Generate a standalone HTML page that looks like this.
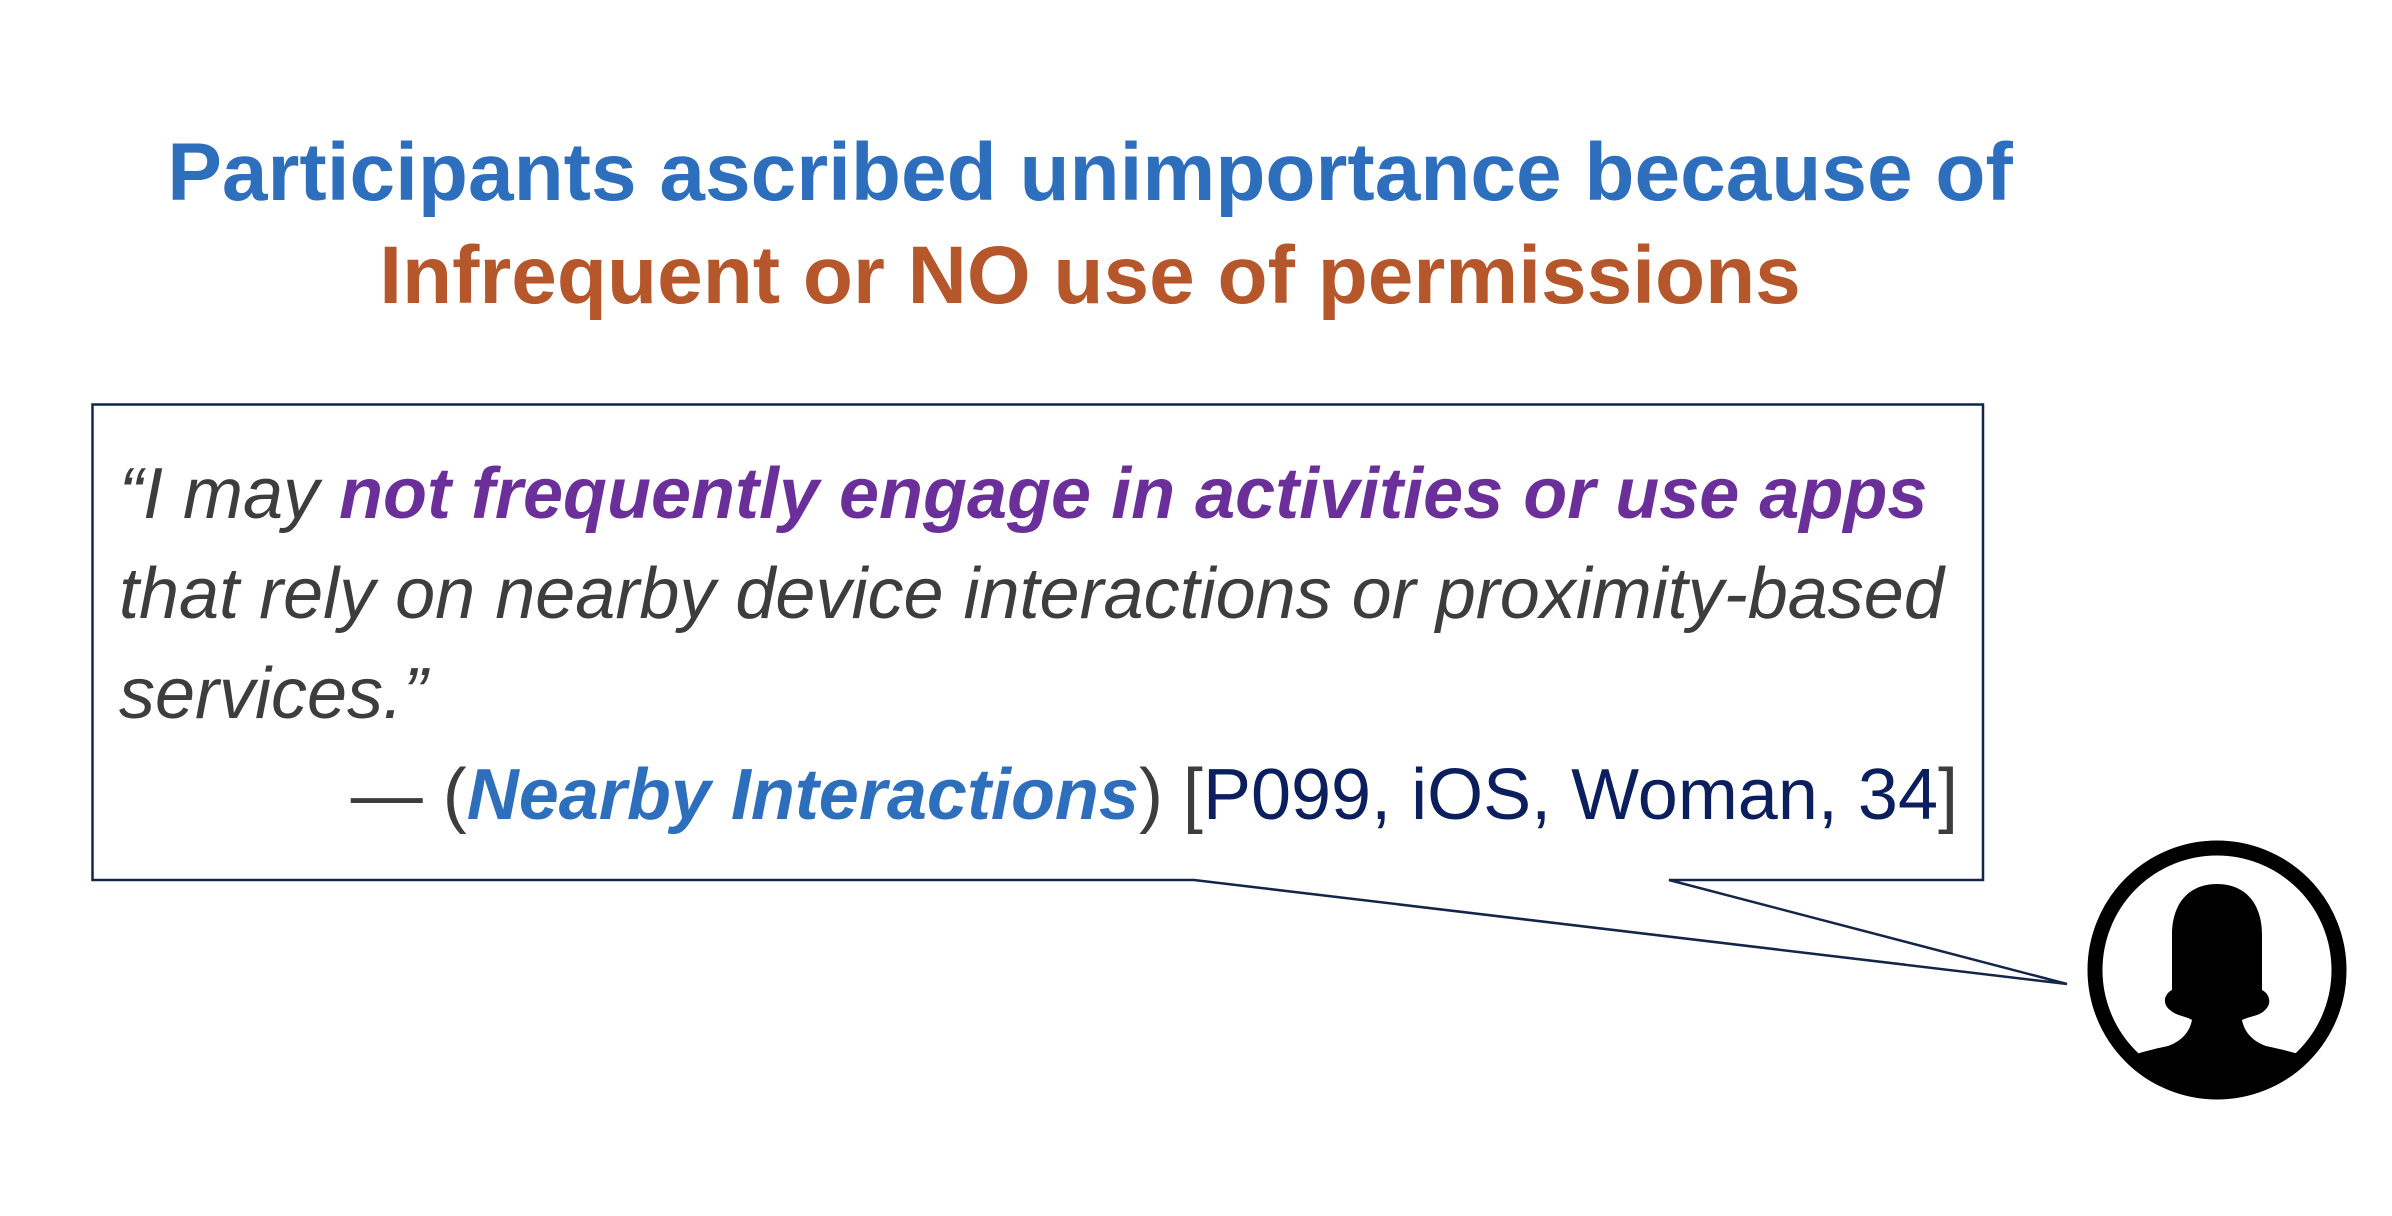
<!DOCTYPE html>
<html><head><meta charset="utf-8">
<style>
html,body{margin:0;padding:0;background:#fff;}
body{width:2392px;height:1216px;position:relative;overflow:hidden;font-family:"Liberation Sans",Arial,sans-serif;}
.t{position:absolute;left:0;width:2180px;text-align:center;font-weight:bold;font-size:82px;white-space:nowrap;line-height:1;}
.q{position:absolute;left:119px;font-size:72px;font-style:italic;color:#3d3d3d;white-space:nowrap;line-height:1;}
.p{color:#6a2f98;font-weight:bold;}
.b{color:#2e6fbd;font-weight:bold;}
.n{color:#0b1f5e;font-style:normal;}
.g{font-style:normal;color:#3d3d3d;}
</style></head><body>
<div class="t" style="top:132px;color:#2e6fbd;">Participants ascribed unimportance because of</div>
<div class="t" style="top:235px;color:#b5562b;">Infrequent or NO use of permissions</div>

<svg width="2392" height="1216" style="position:absolute;left:0;top:0">
  <path d="M1194 880 L92.5 880 L92.5 404.5 L1983 404.5 L1983 880 L1669 880 L2067 984 Z" fill="#fff" stroke="#13264a" stroke-width="2.5"/>
  <circle cx="2217" cy="970" r="122" fill="#fff" stroke="#000" stroke-width="15"/>
  <clipPath id="c"><circle cx="2217" cy="970" r="116"/></clipPath>
  <path clip-path="url(#c)" fill="#000" d="M2217 884 C2190 884 2172 902 2172 935 L2172 990 C2164 994 2162 1004 2170 1010 C2176 1016 2186 1016 2192 1020 C2190 1030 2184 1040 2168 1046 C2150 1050 2130 1054 2118 1064 L2110 1110 L2330 1110 L2316 1062 C2304 1054 2284 1050 2266 1046 C2250 1040 2244 1030 2242 1020 C2250 1016 2260 1016 2265 1010 C2272 1004 2270 994 2262 990 L2262 935 C2262 902 2244 884 2217 884 Z"/>
</svg>

<div class="q" style="top:458px;">“I may <span class="p">not frequently engage in activities or use apps</span></div>
<div class="q" style="top:558px;">that rely on nearby device interactions or proximity-based</div>
<div class="q" style="top:658px;">services.”</div>
<div class="q" style="top:759px;left:auto;right:434px;"><span class="g">— (</span><span class="b">Nearby Interactions</span><span class="g">) [</span><span class="n">P099, iOS, Woman, 34</span><span class="g">]</span></div>
</body></html>
